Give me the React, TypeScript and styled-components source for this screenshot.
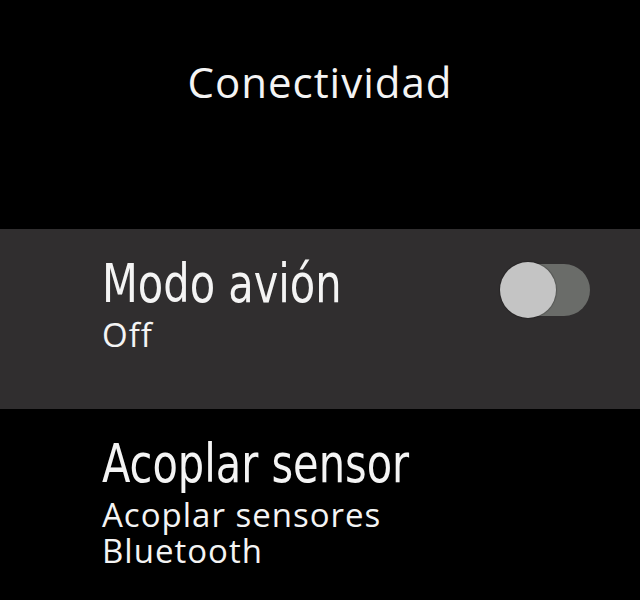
import React from 'react';
import styled, { createGlobalStyle } from 'styled-components';

const GlobalStyle = createGlobalStyle`
  html, body {
    margin: 0;
    padding: 0;
    background: #000;
  }
  body {
    width: 640px;
    height: 600px;
    overflow: hidden;
  }
`;

export const SScreen = styled.div`
  width: 640px;
  height: 600px;
  background: #000;
  color: #f4f4f4;
  display: flex;
  flex-direction: column;
  box-sizing: border-box;
`;

export const SHeader = styled.div`
  height: 229px;
  padding-top: 61px;
  box-sizing: border-box;
  text-align: center;
  font-family: 'Open Sans', 'Noto Sans', sans-serif;
  font-size: 42px;
  line-height: 1;
  letter-spacing: 1px;
`;

export const SRow = styled.div<{ $active?: boolean }>`
  display: flex;
  align-items: flex-start;
  justify-content: space-between;
  box-sizing: border-box;
  padding: 28px 50px 0 102px;
  height: ${({ $active }) => ($active ? '180px' : 'auto')};
  background: ${({ $active }) => ($active ? '#302e2f' : 'transparent')};
`;

export const SInfo = styled.div`
  display: flex;
  flex-direction: column;
`;

// the watch font is much narrower than anything installed, so squeeze it
export const STitle = styled.div`
  font-family: 'DejaVu Sans Condensed', 'DejaVu Sans', sans-serif;
  font-size: 54px;
  line-height: 1;
  white-space: nowrap;
  transform: scaleX(0.855);
  transform-origin: left center;
`;

export const SSub = styled.div<{ $gap: number }>`
  margin-top: ${({ $gap }) => $gap}px;
  font-family: 'Open Sans', 'Noto Sans', sans-serif;
  font-size: 33px;
  line-height: 36px;
  letter-spacing: 1px;
`;

export const SToggle = styled.div`
  position: relative;
  margin-top: 5px;
  width: 90px;
  height: 56px;
`;

export const STrack = styled.div`
  position: absolute;
  right: 0;
  top: 2px;
  width: 86px;
  height: 52px;
  border-radius: 26px;
  background: #6a6c69;
`;

export const SKnob = styled.div`
  position: absolute;
  left: 0;
  top: 0;
  width: 56px;
  height: 56px;
  border-radius: 50%;
  background: #c4c4c4;
  box-shadow: 0 0 1px 1px rgba(0, 0, 0, 0.2);
`;

export default function App() {
  return (
    <>
      <GlobalStyle />
      <SScreen>
        <SHeader>Conectividad</SHeader>
        <SRow $active>
          <SInfo>
            <STitle>Modo avión</STitle>
            <SSub $gap={6}>Off</SSub>
          </SInfo>
          <SToggle>
            <STrack />
            <SKnob />
          </SToggle>
        </SRow>
        <SRow>
          <SInfo>
            <STitle>Acoplar sensor</STitle>
            <SSub $gap={6}>
              Acoplar sensores
              <br />
              Bluetooth
            </SSub>
          </SInfo>
        </SRow>
      </SScreen>
    </>
  );
}
